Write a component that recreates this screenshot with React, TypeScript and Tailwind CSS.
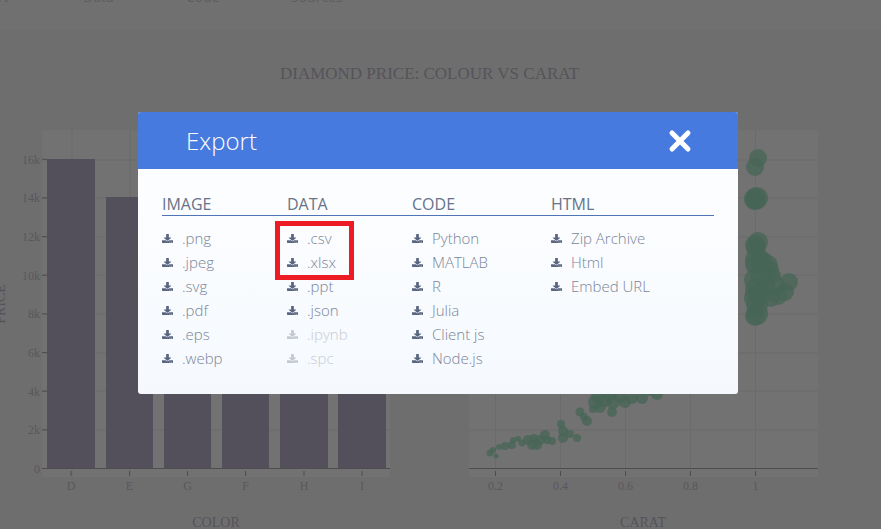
import { FaDownload } from "react-icons/fa";

type Item = { label: string; off?: boolean };

const cols: { title: string; items: Item[] }[] = [
  {
    title: "IMAGE",
    items: [
      { label: ".png" },
      { label: ".jpeg" },
      { label: ".svg" },
      { label: ".pdf" },
      { label: ".eps" },
      { label: ".webp" },
    ],
  },
  {
    title: "DATA",
    items: [
      { label: ".csv" },
      { label: ".xlsx" },
      { label: ".ppt" },
      { label: ".json" },
      { label: ".ipynb", off: true },
      { label: ".spc", off: true },
    ],
  },
  {
    title: "CODE",
    items: [
      { label: "Python" },
      { label: "MATLAB" },
      { label: "R" },
      { label: "Julia" },
      { label: "Client js" },
      { label: "Node.js" },
    ],
  },
  {
    title: "HTML",
    items: [{ label: "Zip Archive" }, { label: "Html" }, { label: "Embed URL" }],
  },
];

const gridY = [160, 198, 237, 275, 314, 353, 391, 430];

const bars = [
  { x: 47, w: 48, top: 159, l: "D" },
  { x: 106, w: 47, top: 197, l: "E" },
  { x: 164, w: 47, top: 240, l: "G" },
  { x: 222, w: 47, top: 250, l: "F" },
  { x: 280, w: 48, top: 260, l: "H" },
  { x: 338, w: 48, top: 300, l: "I" },
];

const yTicks = ["0", "2k", "4k", "6k", "8k", "10k", "12k", "14k", "16k"];

// x, y, r
const pts: [number, number, number][] = [
  [490, 453, 3.5], [496, 456, 2.5], [493, 450, 3], [499, 447, 3], [505, 446, 4], [512, 445, 4],
  [513, 440, 3], [518, 439, 3], [522, 443, 3.5], [528, 440, 5], [532, 445, 5], [537, 445, 5],
  [540, 440, 5], [545, 435, 5], [547, 440, 4], [552, 441, 4], [534, 438, 4], [561, 424, 4],
  [563, 431, 5], [563, 438, 5], [570, 434, 4], [577, 438, 4], [580, 412, 4.5], [584, 417, 4],
  [587, 421, 5], [593, 409, 4], [595, 402, 7], [600, 407, 6], [605, 400, 7], [612, 412, 5],
  [613, 402, 7], [625, 402, 6], [632, 398, 6], [642, 398, 6], [657, 394, 6], [598, 396, 7],
  [620, 396, 7], [610, 394, 7], [650, 390, 6],
  [758, 158, 9], [755, 167, 9], [755, 199, 11], [757, 198, 11], [755, 200, 10],
  [758, 242, 10], [755, 245, 10], [756, 248, 10], [757, 260, 12], [762, 262, 11], [768, 265, 10],
  [770, 270, 9], [755, 265, 10], [755, 280, 11], [757, 290, 12], [755, 298, 11], [760, 295, 11],
  [772, 276, 9], [775, 285, 10], [771, 298, 9], [789, 282, 9], [785, 292, 9], [778, 296, 9],
  [757, 305, 11], [755, 316, 10], [757, 314, 11], [765, 285, 10], [760, 275, 10],
];

function App() {
  return (
    <div className="relative w-[881px] h-[529px] overflow-hidden bg-[#6e6e6e] font-['Liberation_Serif',serif]">
      <div className="h-[30px] bg-[#707070] flex text-[14px] text-[#5e5e5e] font-['Open_Sans',sans-serif] leading-[20px]">
        <span className="ml-[-34px] w-[117px] -mt-[13px]">Export</span>
        <span className="w-[103px] -mt-[13px]">Data</span>
        <span className="w-[105px] -mt-[13px]">Code</span>
        <span className="-mt-[13px]">Sources</span>
      </div>
      <div className="h-[88px] flex items-center justify-center text-[17px] text-[#55535a] pr-[22px]">
        DIAMOND PRICE: COLOUR VS CARAT
      </div>
      <div className="flex">
        <svg width="440" height="411" viewBox="0 118 440 411" className="shrink-0 font-['Liberation_Serif',serif]">
          <rect x="42" y="130" width="348" height="347" fill="#727272" />
          <line x1="72" y1="130" x2="72" y2="477" stroke="#6a6a6a" />
          <line x1="130" y1="130" x2="130" y2="477" stroke="#6a6a6a" />
          {gridY.map((y) => (
            <line key={y} x1="42" y1={y} x2="390" y2={y} stroke="#6b6b6b" />
          ))}
          {bars.map((b) => (
            <rect key={b.l} x={b.x} y={b.top} width={b.w} height={468 - b.top} fill="#534f5b" />
          ))}
          <line x1="42" y1="468.5" x2="390" y2="468.5" stroke="#4e4e4e" />
          {yTicks.map((t, i) => (
            <g key={t}>
              {i > 0 && <line x1="42" y1={468.5 - i * 38.65} x2="47" y2={468.5 - i * 38.65} stroke="#4e4e4e" />}
              <text x="40" y={473 - i * 38.65} textAnchor="end" fontSize="12" fill="#5a575c">
                {t}
              </text>
            </g>
          ))}
          {bars.map((b) => (
            <g key={b.l}>
              <line x1={b.x + b.w / 2} y1="471" x2={b.x + b.w / 2} y2="476" stroke="#4e4e4e" />
              <text x={b.x + b.w / 2} y="490" textAnchor="middle" fontSize="12" fill="#5a575c">
                {b.l}
              </text>
            </g>
          ))}
          <text x="216" y="527" textAnchor="middle" fontSize="14" fill="#55535a">
            COLOR
          </text>
          <text x="0" y="0" transform="translate(5 304) rotate(-90)" textAnchor="middle" fontSize="14" fill="#55535a">
            PRICE
          </text>
        </svg>
        <svg width="441" height="411" viewBox="440 118 441 411" className="shrink-0 font-['Liberation_Serif',serif]">
          <rect x="469" y="130" width="349" height="347" fill="#727272" />
          {gridY.map((y) => (
            <line key={y} x1="469" y1={y} x2="818" y2={y} stroke="#6b6b6b" />
          ))}
          {[495, 560, 625, 690, 755].map((x) => (
            <line key={x} x1={x + 0.5} y1="130" x2={x + 0.5} y2="468" stroke="#6b6b6b" />
          ))}
          {pts.map((p, i) => (
            <circle key={i} cx={p[0]} cy={p[1]} r={p[2]} fill="#476557" fillOpacity="0.75" />
          ))}
          <line x1="469" y1="468.5" x2="818" y2="468.5" stroke="#4e4e4e" />
          {[
            [495, "0.2"],
            [560, "0.4"],
            [625, "0.6"],
            [690, "0.8"],
            [755, "1"],
          ].map(([x, t]) => (
            <g key={t}>
              <line x1={Number(x) + 0.5} y1="471" x2={Number(x) + 0.5} y2="476" stroke="#4e4e4e" />
              <text x={Number(x) + 0.5} y="490" textAnchor="middle" fontSize="12" fill="#5a575c">
                {t}
              </text>
            </g>
          ))}
          <text x="643" y="527" textAnchor="middle" fontSize="14" fill="#55535a">
            CARAT
          </text>
        </svg>
      </div>

      <div className="absolute left-[138px] top-[112px] w-[600px] h-[282px] rounded-[3px] overflow-hidden bg-gradient-to-b from-white to-[#f5f9fe] font-['Open_Sans',sans-serif]">
        <div className="h-[57px] bg-[#467ade] flex items-center justify-between pl-[48px] pr-[46px]">
          <span className="text-[24px] font-light text-white">Export</span>
          <svg width="24" height="24" viewBox="0 0 24 24" className="text-white">
            <path d="M4 4 L20 20 M20 4 L4 20" stroke="currentColor" strokeWidth="5" strokeLinecap="round" />
          </svg>
        </div>
        <div className="px-6 pt-[24px]">
          <div className="flex border-b border-[#4f75b8] h-[23px]">
            {cols.map((c, i) => (
              <div
                key={c.title}
                className={
                  i === 2
                    ? "w-[139px] text-[16px] leading-[22px] text-[#667389]"
                    : "w-[125px] text-[16px] leading-[22px] text-[#667389]"
                }
              >
                {c.title}
              </div>
            ))}
          </div>
          <div className="flex pt-[10px]">
            {cols.map((c, i) => (
              <ul key={c.title} className={i === 2 ? "w-[139px]" : "w-[125px]"}>
                {c.items.map((it) => (
                  <li
                    key={it.label}
                    className={
                      it.off
                        ? "flex items-center h-[24px] text-[15px] font-light text-[#c8ccd3]"
                        : "flex items-center h-[24px] text-[15px] font-light text-[#7a8599]"
                    }
                  >
                    <FaDownload
                      preserveAspectRatio="none"
                      className={
                        it.off
                          ? "w-[11px] h-[9px] mr-[9px] text-[#c4c9d1]"
                          : "w-[11px] h-[9px] mr-[9px] text-[#5a6680]"
                      }
                    />
                    {it.label}
                  </li>
                ))}
              </ul>
            ))}
          </div>
        </div>
      </div>
      <div className="absolute left-[275px] top-[221px] w-[79px] h-[59px] border-[5px] border-[#ed1c24]" />
    </div>
  );
}

export default App;
